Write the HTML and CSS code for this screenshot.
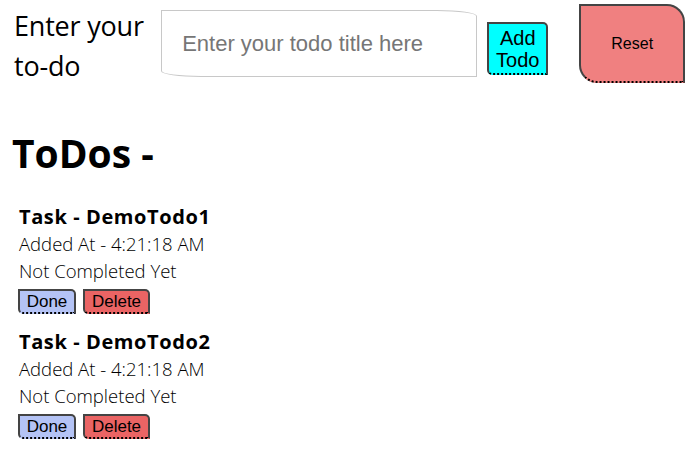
FILE: index.html
```html
<!DOCTYPE html>
<html>
<head>
<meta charset="utf-8">
<link rel="stylesheet" href="styles.css">
</head>
<body>
<div class="entry">
  <label class="entry-label" for="title">Enter your to-do</label>
  <input id="title" class="entry-input" type="text" placeholder="Enter your todo title here">
  <button class="btn btn-add">Add<br>Todo</button>
  <button class="btn btn-reset">Reset</button>
</div>
<h1 class="heading">ToDos -</h1>
<div class="list">
  <div class="task">
    <div class="task-title">Task - DemoTodo1</div>
    <div class="task-line">Added At - 4:21:18 AM</div>
    <div class="task-line">Not Completed Yet</div>
    <div class="task-actions">
      <button class="btn btn-small btn-done">Done</button>
      <button class="btn btn-small btn-delete">Delete</button>
    </div>
  </div>
  <div class="task">
    <div class="task-title">Task - DemoTodo2</div>
    <div class="task-line">Added At - 4:21:18 AM</div>
    <div class="task-line">Not Completed Yet</div>
    <div class="task-actions">
      <button class="btn btn-small btn-done">Done</button>
      <button class="btn btn-small btn-delete">Delete</button>
    </div>
  </div>
</div>
</body>
</html>
```

FILE: styles.css
```css
body {
  margin: 0;
  padding: 4px 8px 0 8px;
  font-family: "Open Sans", "Noto Sans", sans-serif;
  color: #000;
  background: #fff;
}
.entry {
  display: flex;
  align-items: center;
  height: 79px;
}
.entry-label {
  width: 142px;
  margin-left: 6px;
  font-size: 27px;
  line-height: 40px;
  letter-spacing: -0.2px;
  padding-top: 4px;
}
.entry-input {
  box-sizing: border-box;
  width: 316px;
  height: 67px;
  margin-left: 7px;
  margin-top: 0;
  padding: 0 20px;
  border: 1px solid #c8c8c8;
  border-radius: 0 40px 0 40px / 0 6px 0 6px;
  font-family: "Liberation Sans", Arial, sans-serif;
  font-size: 22px;
  outline: none;
}
.entry-input::placeholder {
  color: #767676;
}
.btn {
  font-family: "Liberation Sans", Arial, sans-serif;
  color: #000;
  border: 2px solid #444;
  border-bottom: 2px dotted #000;
  cursor: pointer;
}
.btn-add {
  box-sizing: border-box;
  width: 62px;
  height: 53px;
  margin-left: 10px;
  margin-top: 10px;
  padding: 0;
  background: #00ffff;
  font-size: 20px;
  line-height: 22px;
  border-radius: 0 5px 0 5px;
}
.btn-reset {
  box-sizing: border-box;
  width: 107px;
  height: 79px;
  margin-left: 31px;
  padding: 0;
  background: #f08080;
  font-size: 16px;
  border-radius: 0 18px 0 18px;
}
.heading {
  margin: 44px 0 0 4px;
  font-size: 39px;
  font-weight: 700;
  line-height: 52px;
}
.list {
  margin-top: 24px;
  padding-left: 11px;
}
.task {
  height: 125px;
}
.task-title {
  font-size: 20px;
  font-weight: 700;
  line-height: 27px;
  letter-spacing: 0.6px;
}
.task-line {
  font-size: 18.5px;
  font-weight: 300;
  line-height: 27px;
}
.task-actions {
  display: flex;
  gap: 7px;
  margin-top: 5px;
  margin-left: -1px;
}
.btn-small {
  box-sizing: border-box;
  height: 25px;
  padding: 0 6px;
  font-size: 17px;
  border-radius: 0 5px 0 5px;
}
.btn-done {
  width: 58px;
  background: #b4c3f5;
}
.btn-delete {
  width: 67px;
  background: #ea6464;
}
```
